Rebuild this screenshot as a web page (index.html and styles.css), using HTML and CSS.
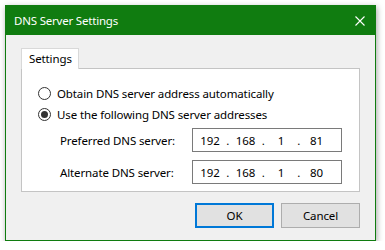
FILE: index.html
```html
<!DOCTYPE html>
<html>
<head>
<meta charset="utf-8">
<link rel="stylesheet" href="styles.css">
</head>
<body>
<div class="window">
  <div class="titlebar">
    <span class="title">DNS Server Settings</span>
    <svg class="close" width="10" height="10" viewBox="0 0 10 10"><path d="M0.5 0.5 L9.5 9.5 M9.5 0.5 L0.5 9.5" stroke="#fff" stroke-width="1.1" fill="none"/></svg>
  </div>
  <div class="content">
    <div class="tabs"><div class="tab">Settings</div></div>
    <div class="panel">
      <div class="radio"><span class="circle"></span><span>Obtain DNS server address automatically</span></div>
      <div class="radio"><span class="circle checked"></span><span>Use the following DNS server addresses</span></div>
      <div class="fields">
        <div class="field">
          <span class="lbl">Preferred DNS server:</span>
          <div class="ip"><span class="seg">192</span><span class="dot">.</span><span class="seg">168</span><span class="dot">.</span><span class="seg">1</span><span class="dot">.</span><span class="seg">81</span></div>
        </div>
        <div class="field">
          <span class="lbl">Alternate DNS server:</span>
          <div class="ip"><span class="seg">192</span><span class="dot">.</span><span class="seg">168</span><span class="dot">.</span><span class="seg">1</span><span class="dot">.</span><span class="seg">80</span></div>
        </div>
      </div>
    </div>
    <div class="buttons">
      <div class="btn default">OK</div>
      <div class="btn">Cancel</div>
    </div>
  </div>
</div>
</body>
</html>
```
FILE: styles.css
```css
html, body {
  margin: 0;
  padding: 0;
  background: #ffffff;
}
body {
  padding: 5px 0 0 5px;
  font-family: "Noto Sans", "Open Sans", sans-serif;
  font-size: 11.5px;
  letter-spacing: -0.12px;
  color: #000;
}
.window {
  width: 371px;
  height: 236px;
  box-sizing: border-box;
  border: 1px solid #107c10;
  background: #f0f0f0;
  box-shadow: 1px 2px 6px rgba(0,0,0,0.35);
  display: flex;
  flex-direction: column;
}
.titlebar {
  height: 29px;
  background: #107c10;
  color: #fff;
  display: flex;
  align-items: center;
  justify-content: space-between;
  padding: 0 10px 0 8px;
  flex: none;
}
.title {
  font-size: 11.5px;
  letter-spacing: -0.2px;
}
.close {
  display: block;
}
.content {
  padding: 13px 15px 0 15px;
  display: flex;
  flex-direction: column;
}
.tabs {
  display: flex;
  margin-bottom: -1px;
  position: relative;
  z-index: 1;
}
.tab {
  width: 58px;
  height: 21px;
  box-sizing: border-box;
  border: 1px solid #d9d9d9;
  border-bottom: none;
  background: #fff;
  padding: 0 0 0 7px;
  line-height: 20px;
}
.panel {
  height: 124px;
  box-sizing: border-box;
  border: 1px solid #c4c4c4;
  background: #fff;
  padding: 14px 0 0 16px;
}
.radio {
  height: 21px;
  display: flex;
  align-items: center;
}
.circle {
  width: 13px;
  height: 13px;
  box-sizing: border-box;
  border: 1px solid #333;
  border-radius: 50%;
  margin-right: 6px;
  display: flex;
  align-items: center;
  justify-content: center;
  background: #fff;
}
.circle.checked::after {
  content: "";
  width: 7px;
  height: 7px;
  border-radius: 50%;
  background: #333;
}
.fields {
  margin-top: 3px;
  display: flex;
  flex-direction: column;
  gap: 8px;
}
.field {
  display: flex;
  align-items: center;
  padding-left: 22px;
}
.lbl {
  width: 132px;
}
.ip {
  width: 150px;
  height: 24px;
  box-sizing: border-box;
  border: 1px solid #7a7a7a;
  background: #fff;
  display: flex;
  align-items: center;
  padding-left: 3px;
}
.seg {
  width: 28px;
  text-align: center;
}
.dot {
  width: 7.5px;
  text-align: center;
}
.buttons {
  display: flex;
  justify-content: flex-end;
  gap: 7px;
  margin-top: 11px;
}
.btn {
  width: 79px;
  height: 25px;
  box-sizing: border-box;
  border: 1px solid #adadad;
  background: #e1e1e1;
  display: flex;
  align-items: center;
  justify-content: center;
}
.btn.default {
  border: 2px solid #0078d7;
}
```
